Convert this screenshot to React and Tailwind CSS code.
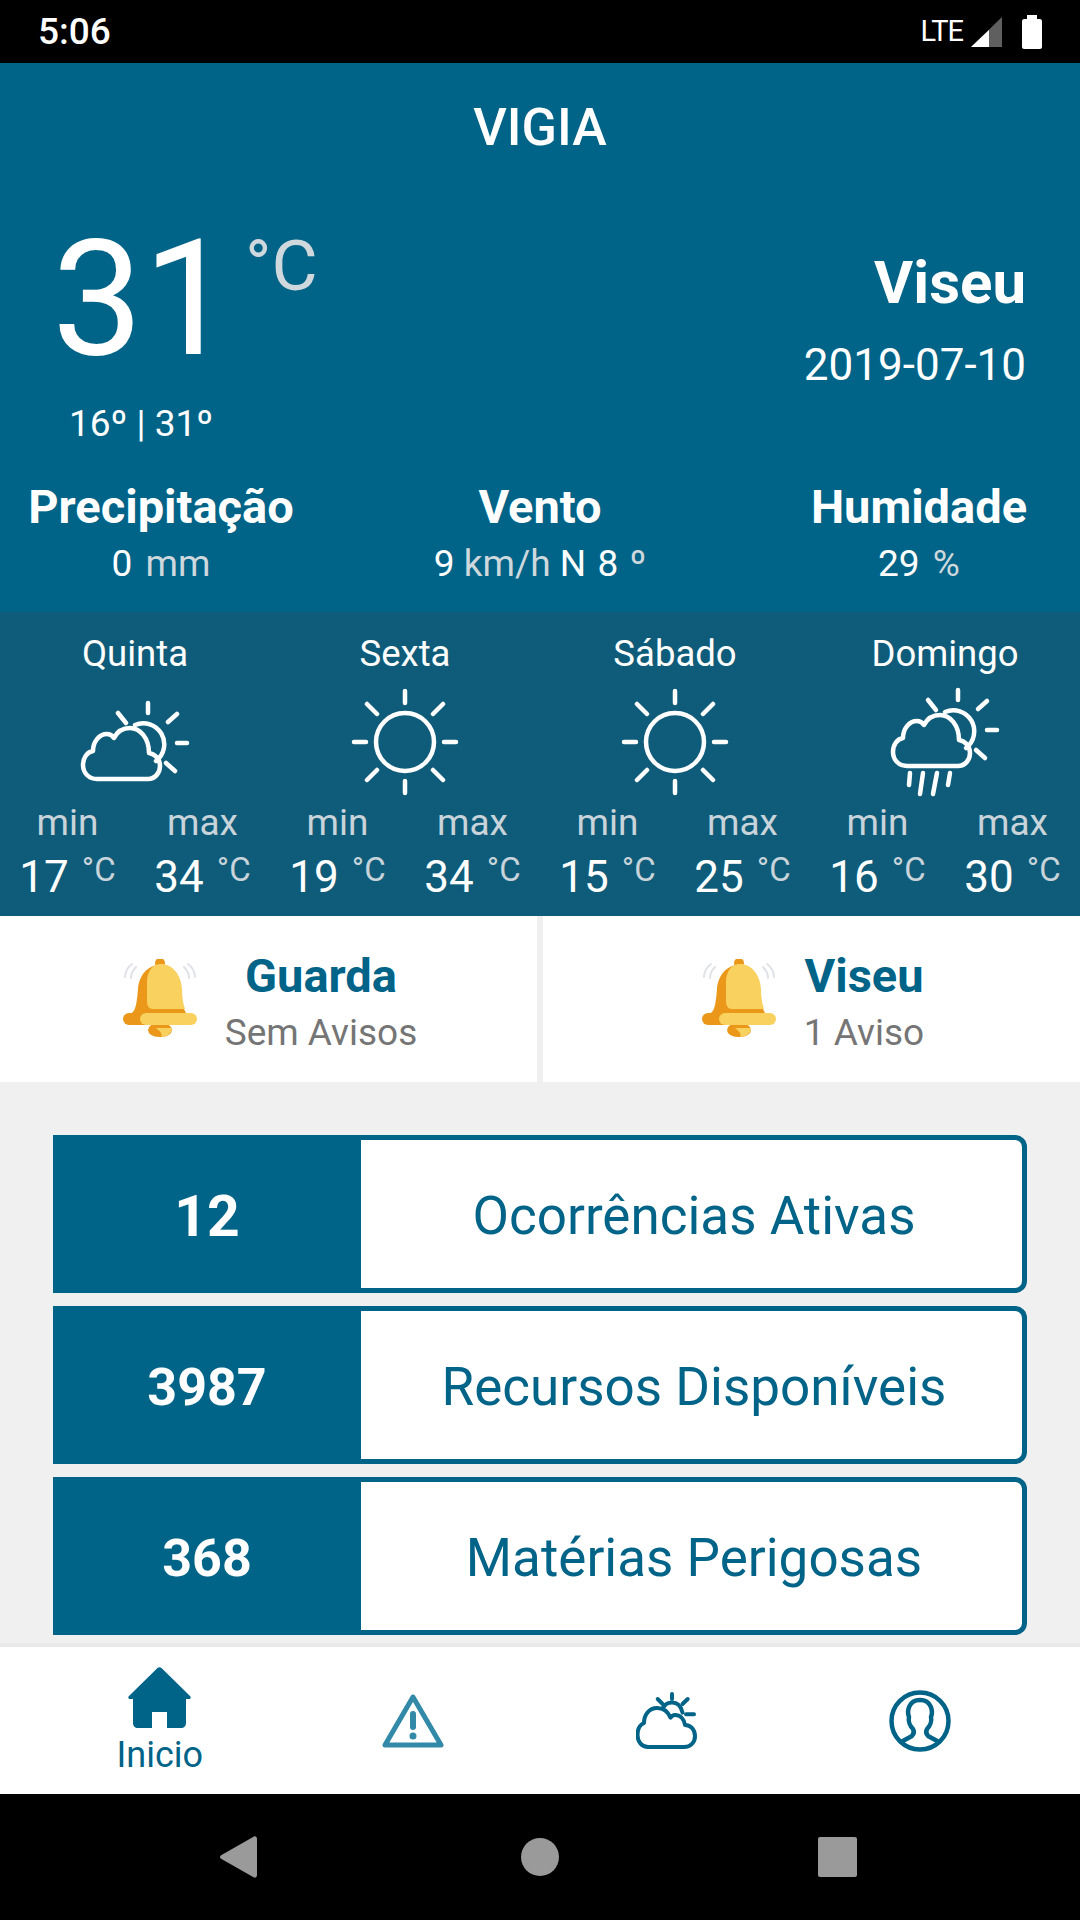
import React from 'react';

const days = [
    {name: 'Quinta', icon: 'cloudSun', min: 17, max: 34},
    {name: 'Sexta', icon: 'sun', min: 19, max: 34},
    {name: 'Sábado', icon: 'sun', min: 15, max: 25},
    {name: 'Domingo', icon: 'rain', min: 16, max: 30},
];

const stats = [
    {value: '12', label: 'Ocorrências Ativas', size: 'text-[57px]'},
    {value: '3987', label: 'Recursos Disponíveis', size: 'text-[52px]'},
    {value: '368', label: 'Matérias Perigosas', size: 'text-[52px]'},
];

const SunIcon = () => (
    <svg width="110" height="110" viewBox="0 0 110 110" fill="none" stroke="#fff" strokeWidth="4.5" strokeLinecap="round">
        <circle cx="55" cy="55" r="29"/>
        <path d="M55 4V16M55 94V106M4 55H16M94 55H106M17 17L27 27M83 83L93 93M17 93L27 83M83 27L93 17"/>
    </svg>
);

const CloudSunIcon = ({rain}) => (
    <svg width="110" height="110" viewBox="0 0 110 110" fill="none" stroke="#fff" strokeWidth="4.5" strokeLinecap="round" strokeLinejoin="round">
        <g transform={rain ? 'translate(0 -13)' : undefined}>
            <path d="M17 92H68C75 92 80 86 80 79C80 72 75 67 69 66C69 51 60 41 50 41C43 41 37 45 34 51C32 48 29 47 27 47C19 47 13 55 13 64C7 65 3 71 3 78C3 86 9 92 17 92Z"/>
            <path d="M55 38A21 21 0 0 1 76 74"/>
            <path d="M68 16V26M97 56H107M88 35L97 27M86 76L95 84M38 26L46 36"/>
        </g>
        {rain && <path d="M20 86L19 98M33 86L30 107M47 86L43 107M60 86L58 98"/>}
    </svg>
);

const Bell = () => (
    <svg width="74" height="80" viewBox="23 20 74 80" fill="none">
        <path d="M25 38C25 33 28 28 32 25M31 39C31 35 33 31 36 28M95 38C95 33 92 28 88 25M89 39C89 35 87 31 84 28" stroke="#dfe3e8" strokeWidth="2" strokeLinecap="round"/>
        <circle cx="60" cy="24" r="5" fill="#ea971a"/>
        <path d="M60 26C47 26 39 37 38 50C37 62 36 71 32 74H86L83 68L70 40Z" fill="#ea971a"/>
        <path d="M61 25C72 25 81 35 82 50C82 58 83 64 85 70H53C49 70 47 67 47 62V43C47 33 52 25 61 25Z" fill="#f8d15f"/>
        <rect x="48" y="84" width="24" height="14" rx="11" fill="#ea971a"/>
        <path d="M56 89H72C72 94 67 98 61 98C63 95 60 92 56 89Z" fill="#f8d15f"/>
        <rect x="23" y="74" width="40" height="12" rx="6" fill="#ea971a"/>
        <rect x="40" y="74" width="57" height="12" rx="6" fill="#f8d15f"/>
    </svg>
);

const HomeIcon = () => (
    <svg width="63" height="62" viewBox="0 0 63 62" fill="#006388">
        <path d="M29.5 1C30.6 0 32.4 0 33.5 1L62 29C63.4 30.4 62.6 32 61 32H58V56C58 59 56 61 53 61H39V45H24V61H10C7 61 5 59 5 56V32H2C0.4 32 -0.4 30.4 1 29Z"/>
    </svg>
);

const WarningIcon = () => (
    <svg width="62" height="56" viewBox="0 0 62 56" fill="none" stroke="#338aa8" strokeLinecap="round" strokeLinejoin="round">
        <path d="M31 4L59 52H3Z" strokeWidth="5"/>
        <path d="M31 21V34" strokeWidth="6"/>
        <circle cx="31" cy="43" r="3.5" fill="#338aa8" stroke="none"/>
    </svg>
);

const WeatherTabIcon = () => (
    <svg width="62" height="57" viewBox="0 0 62 57" fill="none" stroke="#006388" strokeWidth="4" strokeLinecap="round" strokeLinejoin="round">
        <path d="M12 55H48C55 55 59 50 59 44C59 38 55 33 49 33C48 27 44 23 39 23C37 23 35.5 24 34.5 25.6C32 20 27 16 21 16C13 16 8 23 8 31C3 33 1.5 38 1.5 43C1.5 50 6 55 12 55Z"/>
        <path d="M27 16C29 12 32 10.6 36 10.6C41 10.6 45 14 46.5 20.6"/>
        <path d="M36 2V7M51.7 7L46.5 12M21.7 7L27 12.3M50 22.3H58"/>
    </svg>
);

const UserIcon = () => (
    <svg width="62" height="62" viewBox="0 0 62 62" fill="none" stroke="#006388" strokeWidth="4.5" strokeLinecap="round" strokeLinejoin="round">
        <circle cx="31" cy="31" r="28.5"/>
        <path d="M12 52L23 46C25 44 25 41 24 39C21 36 19 31 20 27C18 22 19 10 31 10C43 10 44 22 42 27C43 31 41 36 38 39C37 41 37 44 39 46L50 52"/>
    </svg>
);

const Day = ({day}) => (
    <div className="flex flex-col items-center">
        <div className="h-[50px] mt-[17px] leading-[50px] text-[36.5px] text-white">{day.name}</div>
        <div className="mt-[8px] h-[110px]">
            {day.icon === 'sun' ? <SunIcon/> : <CloudSunIcon rain={day.icon === 'rain'}/>}
        </div>
        <div className="w-full grid grid-cols-2 mt-[4px]">
            {[day.min, day.max].map((t, i) => (
                <div key={i} className="flex flex-col items-center">
                    <div className="h-[44px] leading-[44px] text-[37px] text-[#c9d4da]">{i === 0 ? 'min' : 'max'}</div>
                    <div className="flex items-start gap-[13px] mt-[7px]">
                        <span className="text-[44px] leading-[50px] text-white">{t}</span>
                        <span className="text-[33px] leading-[36px] text-[#c9d4da]">°C</span>
                    </div>
                </div>
            ))}
        </div>
    </div>
);

const Alert = ({title, text, className}) => (
    <div className={`flex items-center justify-center gap-[28px] pl-[3px] bg-white ${className}`}>
        <Bell/>
        <div className="flex flex-col items-center">
            <div className="text-[47px] leading-[56px] font-bold text-[#006388] mt-[7px]">{title}</div>
            <div className="text-[37px] leading-[50px] text-[#757575] mt-[4px]">{text}</div>
        </div>
    </div>
);

export default function App() {
    return (
        <div className="w-[1080px] h-[1920px] flex flex-col bg-[#f0f0f0] font-[Roboto,sans-serif] overflow-hidden">
            {/* status bar */}
            <div className="h-[63px] shrink-0 bg-black flex items-center pl-[38px] pr-[38px]">
                <span className="text-[37px] font-medium text-white">5:06</span>
                <span className="ml-auto text-[29px] text-white tracking-[-1px]">LTE</span>
                <svg width="31" height="30" viewBox="0 0 31 30" className="ml-[8px]">
                    <path d="M31 0V30H0Z" fill="#5f5f5f"/>
                    <path d="M18 13V30H0Z" fill="#fff"/>
                </svg>
                <svg width="20" height="34" viewBox="0 0 20 34" className="ml-[20px]">
                    <path d="M5 0H15V4H18C19 4 20 5 20 6V32C20 33 19 34 18 34H2C1 34 0 33 0 32V6C0 5 1 4 2 4H5Z" fill="#fff"/>
                </svg>
            </div>

            {/* current weather */}
            <div className="h-[549px] shrink-0 bg-[#006388] flex flex-col text-white">
                <div className="h-[128px] flex items-center justify-center pt-[2px] text-[52px] font-medium">VIGIA</div>
                <div className="h-[275px] flex justify-between pr-[54px]">
                    <div className="w-[282px] flex flex-col">
                        <div className="flex pl-[52px] mt-[27px]">
                            <span className="text-[162px] leading-[162px] font-normal">31</span>
                            <span className="text-[71px] leading-[76px] ml-[11px] mt-[10px] text-[#cfd8dc]">°C</span>
                        </div>
                        <div className="text-center text-[37px] leading-[50px] mt-[19px]">16º | 31º</div>
                    </div>
                    <div className="flex flex-col items-end">
                        <div className="text-[60px] leading-[64px] font-bold mt-[60px]">Viseu</div>
                        <div className="text-[44px] leading-[56px] mt-[22px]">2019-07-10</div>
                    </div>
                </div>
                <div className="grid grid-cols-[322px_1fr_322px] text-center">
                    <div>
                        <div className="text-[47px] leading-[60px] font-bold mt-[11px]">Precipitação</div>
                        <div className="text-[37px] leading-[50px] mt-[2px]">0 <span className="ml-[4px] text-[#cfd8dc]">mm</span></div>
                    </div>
                    <div>
                        <div className="text-[47px] leading-[60px] font-bold mt-[11px]">Vento</div>
                        <div className="text-[37px] leading-[50px] mt-[2px]">9 <span className="text-[#cfd8dc]">km/h</span> N <span className="ml-[2px]">8</span> <span className="ml-[2px] text-[#cfd8dc]">º</span></div>
                    </div>
                    <div>
                        <div className="text-[47px] leading-[60px] font-bold mt-[11px]">Humidade</div>
                        <div className="text-[37px] leading-[50px] mt-[2px]">29 <span className="ml-[4px] text-[#cfd8dc]">%</span></div>
                    </div>
                </div>
            </div>

            {/* forecast */}
            <div className="h-[304px] shrink-0 bg-[#0f5c7a] grid grid-cols-4">
                {days.map(d => <Day key={d.name} day={d}/>)}
            </div>

            {/* alerts */}
            <div className="h-[166px] shrink-0 flex justify-between">
                <Alert title="Guarda" text="Sem Avisos" className="w-[537px]"/>
                <Alert title="Viseu" text="1 Aviso" className="w-[537px]"/>
            </div>

            {/* counters */}
            <div className="flex-1 flex flex-col gap-[13px] pt-[53px] px-[53px]">
                {stats.map(s => (
                    <div key={s.label} className="h-[158px] flex">
                        <div className={`w-[308px] bg-[#006388] flex items-center justify-center pt-[5px] font-bold text-white ${s.size}`}>{s.value}</div>
                        <div className="flex-1 bg-white border-[5px] border-l-0 border-[#006388] rounded-r-[12px] flex items-center justify-center pl-[5px] pt-[5px] text-[53px] text-[#006388]">{s.label}</div>
                    </div>
                ))}
            </div>

            {/* tabs */}
            <div className="h-[151px] shrink-0 bg-white border-t-[4px] border-[#e9e9e9] grid grid-cols-4 px-[33px]">
                <div className="flex flex-col items-center justify-center">
                    <HomeIcon/>
                    <div className="text-[36px] leading-[40px] mt-[6px] text-[#006388]">Inicio</div>
                </div>
                <div className="flex items-center justify-center"><WarningIcon/></div>
                <div className="flex items-center justify-center"><WeatherTabIcon/></div>
                <div className="flex items-center justify-center"><UserIcon/></div>
            </div>

            {/* android nav */}
            <div className="h-[126px] shrink-0 bg-black flex items-center pl-[220px]">
                <svg width="37" height="42" viewBox="0 0 37 42">
                    <path d="M34 0.5C35.5 0 37 1 37 3V39C37 41 35.5 42 34 41.5L1.5 23C-0.5 22 -0.5 20 1.5 19Z" fill="#9a9a9a"/>
                </svg>
                <div className="ml-[264px] w-[38px] h-[38px] rounded-full bg-[#9a9a9a]"/>
                <div className="ml-[259px] w-[39px] h-[40px] rounded-[2px] bg-[#9a9a9a]"/>
            </div>
        </div>
    );
}
